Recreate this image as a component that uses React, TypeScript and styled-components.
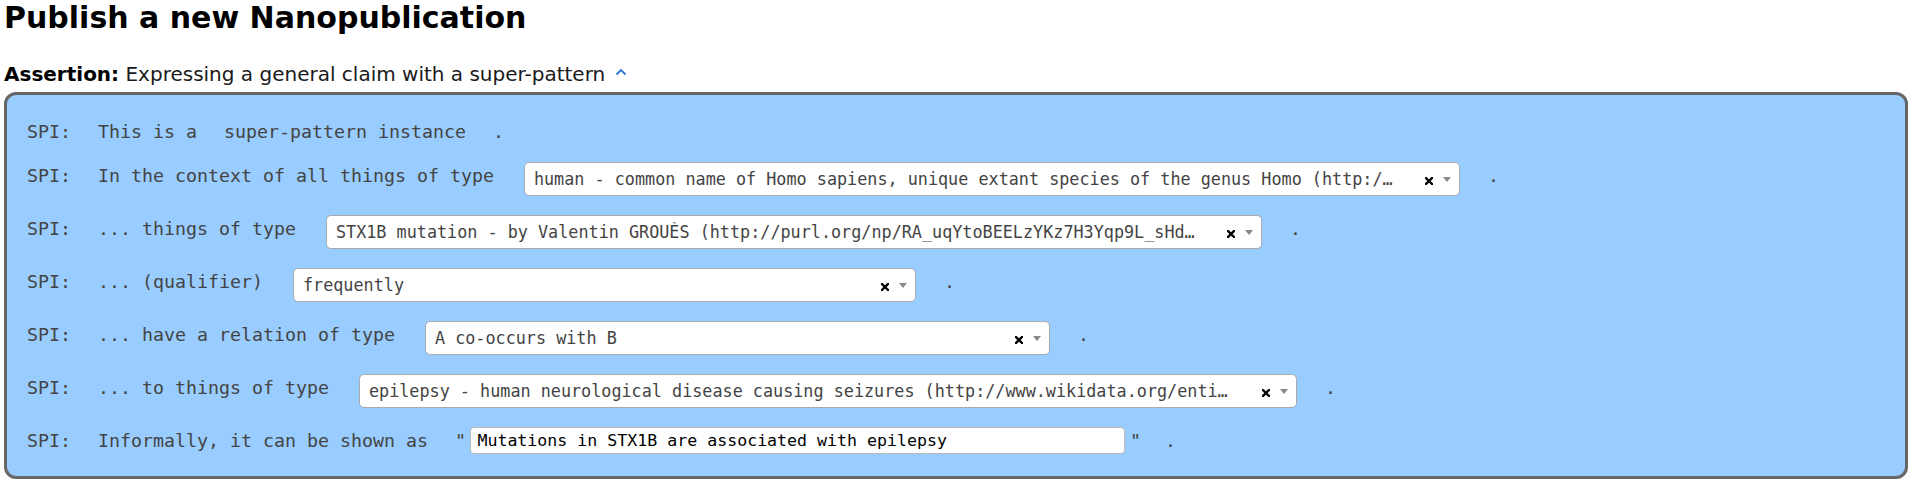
import React from "react";
import styled, { createGlobalStyle } from "styled-components";

const GlobalStyle = createGlobalStyle`
  html, body { margin: 0; padding: 0; background: #fff; }
  body { font-family: "DejaVu Sans", sans-serif; color: #000; }
`;

const Page = styled.div`
  padding: 1px 4px 0 4px;
`;

const Title = styled.h1`
  margin: 0;
  font: bold 30px/34px "DejaVu Sans", sans-serif;
  color: #000;
`;

const SectionHeader = styled.div`
  margin-top: 28px;
  font: 20px/23px "DejaVu Sans", sans-serif;
  color: #1a1a1a;
`;

const Strong = styled.strong`
  font-weight: bold;
  color: #000;
`;

const Toggle = styled.span`
  display: inline-block;
  margin-left: 10px;
  vertical-align: 5px;
  color: #2a78d4;
  line-height: 0;
`;

const TemplateBox = styled.div`
  margin-top: 6px;
  background: #99ccff;
  border: 3px solid #666;
  border-radius: 12px;
  padding: 26px 20px 22px 20px;
  display: flex;
  flex-direction: column;
  gap: 19px;
`;

const Row = styled.div`
  display: flex;
  align-items: flex-start;
  gap: 27px;
  font: 18.27px/22px "DejaVu Sans Mono", monospace;
  color: #444;
  white-space: pre;
`;

const Label = styled.span<{ $offset?: boolean }>`
  margin-top: ${(p) => (p.$offset ? 3 : 0)}px;
`;

const Select = styled.div<{ $width: number }>`
  box-sizing: border-box;
  flex-shrink: 0;
  width: ${(p) => p.$width}px;
  height: 34px;
  margin: 0 1px 0 3px;
  display: flex;
  align-items: center;
  background: #fff;
  border: 1px solid #aaa;
  border-radius: 5px;
  padding: 0 8px 0 9px;
`;

const SelectText = styled.span`
  flex: 1;
  min-width: 0;
  overflow: hidden;
  text-overflow: ellipsis;
  white-space: nowrap;
  font: 16.8px/20px "DejaVu Sans Mono", monospace;
  color: #444;
`;

const Clear = styled.span`
  display: flex;
  margin-top: 3px;
  margin-left: 8px;
  line-height: 0;
`;

const Arrow = styled.span`
  width: 0;
  height: 0;
  margin-left: 10px;
  border-style: solid;
  border-width: 5px 4px 0 4px;
  border-color: #888 transparent transparent transparent;
`;

const QuoteGroup = styled.span`
  display: flex;
  align-items: flex-start;
  gap: 4.5px;
  margin-right: -3px;
`;

const Quote = styled.span`
  margin-top: 3px;
`;

const TextInput = styled.input`
  box-sizing: border-box;
  width: 655px;
  height: 27px;
  margin: 0;
  padding: 0 6px;
  background: #fff;
  border: 1px solid #b8b8b8;
  border-radius: 4px;
  font: 16.6px "DejaVu Sans Mono", monospace;
  color: #000;
  outline: none;
`;

const ClearIcon = () => (
  <svg width="8" height="8" viewBox="0 0 8 8">
    <path d="M1 1 L7 7 M7 1 L1 7" stroke="#000" strokeWidth="2.4" strokeLinecap="square" />
  </svg>
);

const SelectBox = ({ text, width }: { text: string; width: number }) => (
  <Select $width={width}>
    <SelectText>{text}</SelectText>
    <Clear>
      <ClearIcon />
    </Clear>
    <Arrow />
  </Select>
);

const rows = [
  {
    label: "In the context of all things of type",
    value: "human - common name of Homo sapiens, unique extant species of the genus Homo (http:/…",
    width: 936,
  },
  {
    label: "... things of type",
    value: "STX1B mutation - by Valentin GROUÈS (http://purl.org/np/RA_uqYtoBEELzYKz7H3Yqp9L_sHd…",
    width: 936,
  },
  { label: "... (qualifier)", value: "frequently", width: 623 },
  { label: "... have a relation of type", value: "A co-occurs with B", width: 625 },
  {
    label: "... to things of type",
    value: "epilepsy - human neurological disease causing seizures (http://www.wikidata.org/enti…",
    width: 938,
  },
];

export default function App() {
  return (
    <>
      <GlobalStyle />
      <Page>
        <Title>Publish a new Nanopublication</Title>
        <SectionHeader>
          <Strong>Assertion:</Strong> Expressing a general claim with a super-pattern
          <Toggle>
            <svg width="12" height="8" viewBox="0 0 12 8">
              <path d="M1.5 6.5 L6 2 L10.5 6.5" fill="none" stroke="currentColor" strokeWidth="1.8" />
            </svg>
          </Toggle>
        </SectionHeader>
        <TemplateBox>
          <Row>
            <Label>SPI:</Label>
            <Label>This is a</Label>
            <Label>super-pattern instance</Label>
            <Label>.</Label>
          </Row>
          {rows.map((r) => (
            <Row key={r.label}>
              <Label $offset>SPI:</Label>
              <Label $offset>{r.label}</Label>
              <SelectBox text={r.value} width={r.width} />
              <Label $offset>.</Label>
            </Row>
          ))}
          <Row>
            <Label $offset>SPI:</Label>
            <Label $offset>Informally, it can be shown as</Label>
            <QuoteGroup>
              <Quote>"</Quote>
              <TextInput readOnly defaultValue="Mutations in STX1B are associated with epilepsy" />
              <Quote>"</Quote>
            </QuoteGroup>
            <Label $offset>.</Label>
          </Row>
        </TemplateBox>
      </Page>
    </>
  );
}
